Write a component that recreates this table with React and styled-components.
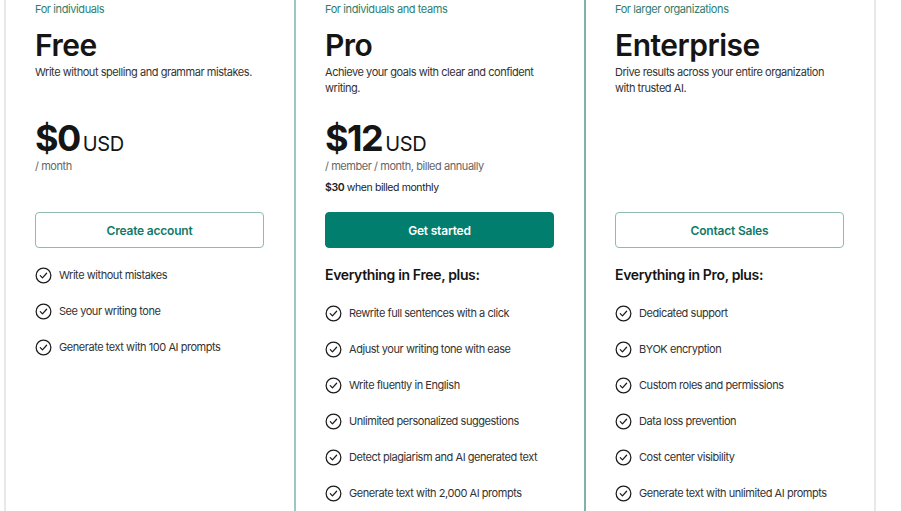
import React from 'react';
import styled, { createGlobalStyle } from 'styled-components';

const GlobalStyle = createGlobalStyle`
  html, body {
    margin: 0;
    padding: 0;
    background: #fff;
  }
  body {
    font-family: Inter, "Liberation Sans", sans-serif;
    color: #1b1b1b;
    overflow: hidden;
  }
`;

const Page = styled.div`
  display: grid;
  grid-template-columns: 290px 290px 292px;
  padding-left: 4px;
  height: 511px;
`;

const Card = styled.div`
  box-sizing: border-box;
  border-left: 2px solid ${p => p.$border};
  border-right: ${p => (p.$last ? '2px solid #e8e8e8' : 'none')};
  padding: 1px 30px 0 29px;
  display: flex;
  flex-direction: column;
`;

const Audience = styled.div`
  font-size: 11px;
  line-height: 16px;
  color: #2f7d6f;
  letter-spacing: -0.4px;
`;

const Title = styled.h2`
  margin: 10px 0 0;
  font-size: 30px;
  line-height: 36px;
  font-weight: 600;
  letter-spacing: -0.5px;
  color: #151515;
`;

const Desc = styled.p`
  margin: 1px 0 0;
  font-size: 11px;
  line-height: 16px;
  color: #333;
  letter-spacing: -0.45px;
  min-height: 32px;
`;

const PriceRow = styled.div`
  margin-top: 20px;
  display: flex;
  align-items: baseline;
  gap: 3px;
  height: 40px;
`;

const Amount = styled.span`
  font-size: 36px;
  font-weight: 700;
  letter-spacing: -1.5px;
  color: #151515;
`;

const Currency = styled.span`
  font-size: 20px;
  font-weight: 400;
  letter-spacing: -0.4px;
  color: #151515;
`;

const Period = styled.div`
  margin-top: 2px;
  font-size: 11px;
  line-height: 16px;
  color: #666;
  letter-spacing: -0.45px;
`;

const Monthly = styled.div`
  margin-top: 6px;
  font-size: 10.5px;
  line-height: 16px;
  color: #222;
  letter-spacing: -0.4px;
  height: 16px;
  b {
    font-weight: 600;
  }
`;

const Button = styled.a`
  margin-top: 16px;
  box-sizing: border-box;
  height: 36px;
  display: flex;
  align-items: center;
  justify-content: center;
  border-radius: 4px;
  font-size: 12px;
  font-weight: 600;
  letter-spacing: -0.2px;
  text-decoration: none;
  cursor: pointer;
  border: 1px solid ${p => (p.$primary ? '#027e6f' : '#8dbbb2')};
  background: ${p => (p.$primary ? '#027e6f' : '#fff')};
  color: ${p => (p.$primary ? '#fff' : '#117a69')};
`;

const Plus = styled.div`
  margin-top: 18px;
  font-size: 14px;
  line-height: 18px;
  font-weight: 600;
  letter-spacing: -0.35px;
  color: #151515;
`;

const List = styled.ul`
  list-style: none;
  margin: ${p => (p.$afterPlus ? '20px' : '18px')} 0 0;
  padding: 0;
  display: flex;
  flex-direction: column;
  gap: 18px;
`;

const Item = styled.li`
  display: flex;
  align-items: center;
  gap: 7px;
  font-size: 11px;
  line-height: 18px;
  color: #333;
  letter-spacing: -0.45px;
  white-space: nowrap;
`;

const Check = () => (
  <svg width="17" height="17" viewBox="0 0 18 18" fill="none">
    <circle cx="9" cy="9" r="7.8" stroke="#1b1b1b" strokeWidth="1.3" />
    <path d="M5.6 9.2l2.3 2.3 4.4-4.9" stroke="#1b1b1b" strokeWidth="1.3" strokeLinecap="round" strokeLinejoin="round" />
  </svg>
);

const plans = [
  {
    audience: 'For individuals',
    title: 'Free',
    desc: 'Write without spelling and grammar mistakes.',
    amount: '$0',
    period: '/ month',
    cta: 'Create account',
    border: '#e8e8e8',
    features: ['Write without mistakes', 'See your writing tone', 'Generate text with 100 AI prompts'],
  },
  {
    audience: 'For individuals and teams',
    title: 'Pro',
    desc: 'Achieve your goals with clear and confident writing.',
    amount: '$12',
    period: '/ member / month, billed annually',
    monthly: true,
    cta: 'Get started',
    primary: true,
    plus: 'Everything in Free, plus:',
    border: '#9fc6be',
    features: [
      'Rewrite full sentences with a click',
      'Adjust your writing tone with ease',
      'Write fluently in English',
      'Unlimited personalized suggestions',
      'Detect plagiarism and AI generated text',
      'Generate text with 2,000 AI prompts',
    ],
  },
  {
    audience: 'For larger organizations',
    title: 'Enterprise',
    desc: 'Drive results across your entire organization with trusted AI.',
    cta: 'Contact Sales',
    plus: 'Everything in Pro, plus:',
    border: '#80b3a7',
    last: true,
    features: [
      'Dedicated support',
      'BYOK encryption',
      'Custom roles and permissions',
      'Data loss prevention',
      'Cost center visibility',
      'Generate text with unlimited AI prompts',
    ],
  },
];

export default function App() {
  return (
    <>
      <GlobalStyle />
      <Page>
        {plans.map(p => (
          <Card key={p.title} $border={p.border} $last={p.last}>
            <Audience>{p.audience}</Audience>
            <Title>{p.title}</Title>
            <Desc>{p.desc}</Desc>
            <PriceRow>
              {p.amount && (
                <>
                  <Amount>{p.amount}</Amount>
                  <Currency>USD</Currency>
                </>
              )}
            </PriceRow>
            <Period>{p.period || '\u00a0'}</Period>
            <Monthly>
              {p.monthly && (
                <>
                  <b>$30</b> when billed monthly
                </>
              )}
            </Monthly>
            <Button $primary={p.primary}>{p.cta}</Button>
            {p.plus && <Plus>{p.plus}</Plus>}
            <List $afterPlus={!!p.plus}>
              {p.features.map(f => (
                <Item key={f}>
                  <Check />
                  {f}
                </Item>
              ))}
            </List>
          </Card>
        ))}
      </Page>
    </>
  );
}
